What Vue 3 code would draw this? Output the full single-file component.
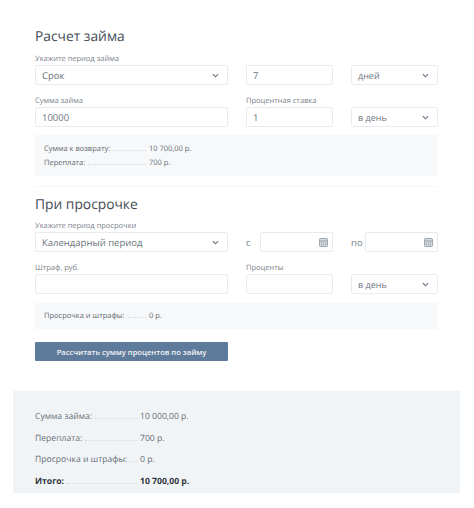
<template>
  <div class="page">
    <section class="calc">
      <h2 class="title">Расчет займа</h2>
      <div class="row">
        <label class="field">
          <span class="label">Укажите период займа</span>
          <span class="control">Срок<svg class="chev" viewBox="0 0 8 5"><path d="M1 1l3 3 3-3" /></svg></span>
        </label>
        <label class="field">
          <span class="label"></span>
          <span class="control">7</span>
        </label>
        <label class="field">
          <span class="label"></span>
          <span class="control small">дней<svg class="chev" viewBox="0 0 8 5"><path d="M1 1l3 3 3-3" /></svg></span>
        </label>
      </div>
      <div class="row second">
        <label class="field">
          <span class="label">Сумма займа</span>
          <span class="control">10000</span>
        </label>
        <label class="field">
          <span class="label">Процентная ставка</span>
          <span class="control">1</span>
        </label>
        <label class="field">
          <span class="label"></span>
          <span class="control small">в день<svg class="chev" viewBox="0 0 8 5"><path d="M1 1l3 3 3-3" /></svg></span>
        </label>
      </div>
      <div class="info">
        <div v-for="r in firstInfo" :key="r.name" class="info-row">
          <span class="info-name">{{ r.name }}<span class="dots"></span></span>
          <span class="info-val">{{ r.value }}</span>
        </div>
      </div>
      <div class="divider"></div>

      <h2 class="title title-two">При просрочке</h2>
      <div class="row">
        <label class="field">
          <span class="label">Укажите период просрочки</span>
          <span class="control">Календарный период<svg class="chev" viewBox="0 0 8 5"><path d="M1 1l3 3 3-3" /></svg></span>
        </label>
        <div class="field">
          <span class="label"></span>
          <div class="date-wrap from">
            <span class="prefix">с</span>
            <span class="control date"><svg class="cal" viewBox="0 0 9 9"><rect x="0.5" y="0.5" width="8" height="8" rx="1" /><path d="M0.5 3h8M2 5h1M4 5h1M6 5h1M2 6.8h1M4 6.8h1M6 6.8h1" /></svg></span>
          </div>
        </div>
        <div class="field">
          <span class="label"></span>
          <div class="date-wrap">
            <span class="prefix">по</span>
            <span class="control date"><svg class="cal" viewBox="0 0 9 9"><rect x="0.5" y="0.5" width="8" height="8" rx="1" /><path d="M0.5 3h8M2 5h1M4 5h1M6 5h1M2 6.8h1M4 6.8h1M6 6.8h1" /></svg></span>
          </div>
        </div>
      </div>
      <div class="row second">
        <label class="field">
          <span class="label">Штраф, руб.</span>
          <span class="control"></span>
        </label>
        <label class="field">
          <span class="label">Проценты</span>
          <span class="control"></span>
        </label>
        <label class="field">
          <span class="label"></span>
          <span class="control small">в день<svg class="chev" viewBox="0 0 8 5"><path d="M1 1l3 3 3-3" /></svg></span>
        </label>
      </div>
      <div class="info info-single">
        <div class="info-row">
          <span class="info-name">Просрочка и штрафы:<span class="dots"></span></span>
          <span class="info-val">0 р.</span>
        </div>
      </div>
      <button class="submit" type="button">Рассчитать сумму процентов по займу</button>
    </section>

    <section class="summary">
      <div v-for="r in summary" :key="r.name" class="sum-row" :class="{ total: r.total }">
        <span class="sum-name">{{ r.name }}<span class="dots"></span></span>
        <span class="sum-val">{{ r.value }}</span>
      </div>
    </section>
  </div>
</template>

<script setup>
const firstInfo = [
  { name: 'Сумма к возврату:', value: '10 700,00 р.' },
  { name: 'Переплата:', value: '700 р.' }
]

const summary = [
  { name: 'Сумма займа:', value: '10 000,00 р.' },
  { name: 'Переплата:', value: '700 р.' },
  { name: 'Просрочка и штрафы:', value: '0 р.' },
  { name: 'Итого:', value: '10 700,00 р.', total: true }
]
</script>

<style scoped>
.page {
  width: 474px;
  height: 508px;
  box-sizing: border-box;
  padding-top: 27px;
  background: #fff;
  font-family: "Open Sans", "Noto Sans", sans-serif;
  color: #5c6670;
  text-rendering: geometricPrecision;
  overflow: hidden;
}

.calc {
  padding: 0 36px 0 35px;
}

.title {
  margin: 0;
  font-size: 13.8px;
  line-height: 19px;
  font-weight: 400;
  color: #454c55;
}

.title-two {
  margin-top: 8px;
}

.row {
  display: grid;
  grid-template-columns: 193px 87px 87px;
  column-gap: 18px;
  margin-top: 7px;
}

.title-two + .row {
  margin-top: 6px;
}

.row.second {
  margin-top: 10px;
}

.field {
  display: flex;
  flex-direction: column;
  min-width: 0;
}

.label {
  height: 12px;
  font-size: 7.5px;
  line-height: 12px;
  color: #7a828b;
}

.control {
  display: flex;
  align-items: center;
  justify-content: space-between;
  box-sizing: border-box;
  height: 20px;
  padding: 0 7px 0 6px;
  border: 1px solid #e9ebef;
  border-radius: 2px;
  background: #fff;
  font-size: 9.5px;
  color: #6a737c;
}

.control.small {
  font-size: 9px;
}

.chev {
  width: 7px;
  height: 5px;
  margin-right: 1px;
}

.chev path {
  fill: none;
  stroke: #5c6b7c;
  stroke-width: 1.2;
}

.date-wrap {
  display: flex;
  align-items: center;
  gap: 2px;
}

.date-wrap.from {
  gap: 9px;
}

.prefix {
  font-size: 9.5px;
  color: #7a828b;
}

.control.date {
  flex: 1;
  justify-content: flex-end;
  padding-right: 4px;
}

.cal {
  width: 9px;
  height: 9px;
}

.cal rect {
  fill: #d5dadf;
  stroke: #8a949e;
  stroke-width: 0.8;
}

.cal path {
  fill: none;
  stroke: #87919b;
  stroke-width: 0.8;
}

.info {
  box-sizing: border-box;
  height: 41px;
  margin-top: 8px;
  padding: 7px 9px 0;
  background: #f7f8fa;
  font-size: 7.5px;
}

.info-single {
  height: 26px;
  margin-top: 9px;
  padding: 0 9px;
  display: flex;
  align-items: center;
}

.info-row {
  display: flex;
  align-items: baseline;
  height: 14px;
  line-height: 14px;
  color: #5f6870;
}

.info-name,
.sum-name {
  display: flex;
  align-items: baseline;
  flex: none;
  width: 105px;
}

.dots {
  flex: 1;
  margin: 0 3px;
  border-bottom: 1px dotted #d5d9dd;
}

.divider {
  height: 1px;
  margin-top: 10px;
  background: #f6f7f9;
}

.submit {
  display: block;
  width: 193px;
  height: 19px;
  margin-top: 13px;
  padding: 0;
  border: 0;
  border-radius: 1px;
  background: #5f7b9b;
  color: #f2f4f7;
  font-family: inherit;
  font-size: 7.6px;
  font-weight: 600;
}

.summary {
  box-sizing: border-box;
  width: 447px;
  height: 102px;
  margin: 30px 0 0 13px;
  padding: 15px 22px 0;
  background: #f1f4f7;
  font-size: 8.6px;
}

.sum-row {
  display: flex;
  align-items: baseline;
  height: 21.7px;
  line-height: 21.7px;
  color: #666d75;
}

.sum-row.total {
  font-weight: 700;
  color: #2f343a;
}
</style>
